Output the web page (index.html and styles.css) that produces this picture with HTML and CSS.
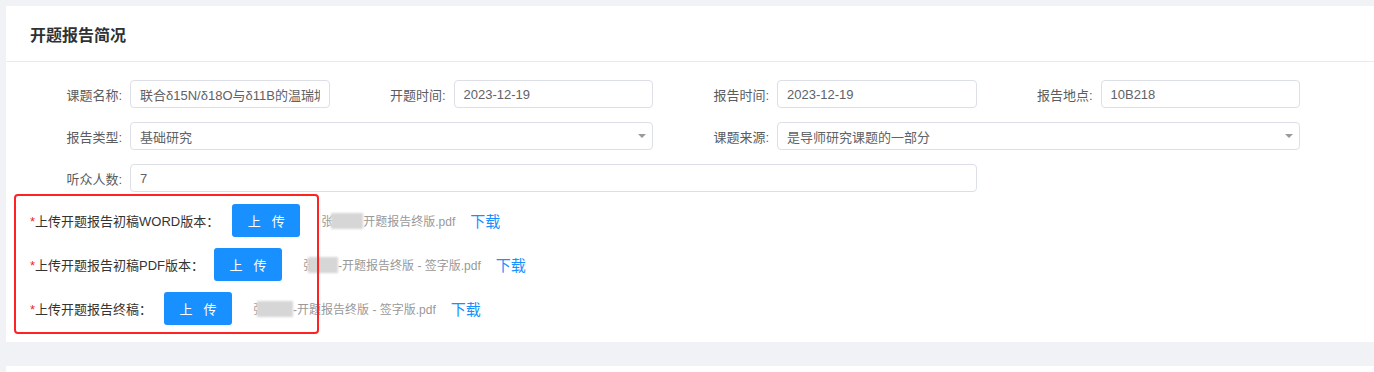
FILE: index.html
```html
<!DOCTYPE html>
<html lang="zh-CN">
<head>
<meta charset="utf-8">
<title>开题报告简况</title>
<link rel="stylesheet" href="styles.css">
</head>
<body>
<div class="page">
  <div class="card">
    <div class="card-header">开题报告简况</div>
    <div class="card-body">
      <div class="form">
        <div class="field">
          <span class="label">课题名称:</span>
          <div class="input"><span class="val">联合δ15N/δ18O与δ11B的温瑞塘河流域硝酸盐来源解析</span></div>
        </div>
        <div class="field">
          <span class="label">开题时间:</span>
          <div class="input"><span class="val">2023-12-19</span></div>
        </div>
        <div class="field">
          <span class="label">报告时间:</span>
          <div class="input"><span class="val">2023-12-19</span></div>
        </div>
        <div class="field">
          <span class="label">报告地点:</span>
          <div class="input"><span class="val">10B218</span></div>
        </div>
        <div class="field span2">
          <span class="label">报告类型:</span>
          <div class="input select"><span class="val">基础研究</span><span class="caret"></span></div>
        </div>
        <div class="field span2">
          <span class="label">课题来源:</span>
          <div class="input select"><span class="val">是导师研究课题的一部分</span><span class="caret"></span></div>
        </div>
        <div class="field span3">
          <span class="label">听众人数:</span>
          <div class="input"><span class="val">7</span></div>
        </div>
      </div>

      <div class="uploads">
        <div class="up-row">
          <span class="up-label"><span class="req">*</span>上传开题报告初稿WORD版本：</span>
          <button class="btn btn-word"><span>上</span><span>传</span></button>
          <span class="file">张<span class="mask m1"></span>开题报告终版.pdf</span>
          <a class="dl">下载</a>
        </div>
        <div class="up-row">
          <span class="up-label"><span class="req">*</span>上传开题报告初稿PDF版本：</span>
          <button class="btn btn-pdf"><span>上</span><span>传</span></button>
          <span class="file">张<span class="mask m2"></span>-开题报告终版 - 签字版.pdf</span>
          <a class="dl">下载</a>
        </div>
        <div class="up-row">
          <span class="up-label"><span class="req">*</span>上传开题报告终稿：</span>
          <button class="btn"><span>上</span><span>传</span></button>
          <span class="file">张<span class="mask m3"></span>-开题报告终版 - 签字版.pdf</span>
          <a class="dl">下载</a>
        </div>
        <div class="highlight"></div>
      </div>
    </div>
  </div>
  <div class="card next"></div>
</div>
</body>
</html>
```

FILE: styles.css
```css
* { box-sizing: border-box; }

html, body {
  margin: 0;
  padding: 0;
  background: #f0f2f5;
  font-family: "Liberation Sans", "Noto Sans CJK SC", sans-serif;
  overflow: hidden;
}

.page {
  padding: 6px 0 0 6px;
}

.card {
  background: #ffffff;
}

.card-header {
  height: 56px;
  padding-left: 24px;
  display: flex;
  align-items: center;
  border-bottom: 1px solid #e8eaec;
  font-size: 16px;
  font-weight: bold;
  color: #303133;
}

.card-body {
  padding: 18px 0 17px 0;
}

.form {
  width: 1294px;
  display: grid;
  grid-template-columns: repeat(4, 1fr);
  row-gap: 14px;
}

.field {
  display: flex;
  align-items: center;
  min-width: 0;
}

.span2 { grid-column: span 2; }
.span3 { grid-column: span 3; }

.label {
  width: 124px;
  flex: none;
  text-align: right;
  padding-right: 8px;
  font-size: 13px;
  color: #5a5c60;
}

.input {
  flex: 1;
  min-width: 0;
  height: 28px;
  border: 1px solid #dcdfe6;
  border-radius: 4px;
  padding: 0 9px;
  display: flex;
  align-items: center;
  font-size: 13px;
  color: #606266;
  overflow: hidden;
}

.val {
  flex: 1;
  min-width: 0;
  white-space: nowrap;
  overflow: hidden;
  text-overflow: clip;
}

.select {
  padding-right: 6px;
}

.caret {
  width: 0;
  height: 0;
  border-left: 4px solid transparent;
  border-right: 4px solid transparent;
  border-top: 4px solid #9a9a9a;
  flex: none;
}

.uploads {
  position: relative;
  margin-top: 12px;
  padding-left: 24px;
  display: flex;
  flex-direction: column;
  gap: 11px;
}

.up-row {
  height: 33px;
  display: flex;
  align-items: center;
}

.up-label {
  font-size: 13px;
  color: #333333;
}

.req {
  color: #f5222d;
}

.btn {
  margin-left: 12px;
  width: 68px;
  height: 33px;
  border: none;
  border-radius: 3px;
  background: #1890ff;
  color: #ffffff;
  font-family: inherit;
  font-size: 13px;
  display: inline-flex;
  align-items: center;
  justify-content: center;
  gap: 11px;
  padding: 0;
}

.btn-word { margin-left: 13px; }
.btn-pdf { margin-left: 10px; }

.file {
  margin-left: 21px;
  font-size: 12px;
  color: #999999;
  display: inline-flex;
  align-items: center;
  white-space: nowrap;
}

.mask {
  display: inline-block;
  height: 16px;
  background: #d6d6d6;
  filter: blur(1.2px);
}

.m1 { width: 32px; margin-left: -2px; }
.m2 { width: 30px; margin-left: -7px; }
.m3 { width: 36px; margin-left: -8px; }

.dl {
  margin-left: 15px;
  font-size: 15px;
  color: #1890ff;
  cursor: pointer;
}

.highlight {
  position: absolute;
  left: 8px;
  top: -10px;
  width: 305px;
  height: 140px;
  border: 2px solid #ff2222;
  border-radius: 4px;
  pointer-events: none;
}

.card.next {
  margin-top: 24px;
  height: 40px;
}
```
